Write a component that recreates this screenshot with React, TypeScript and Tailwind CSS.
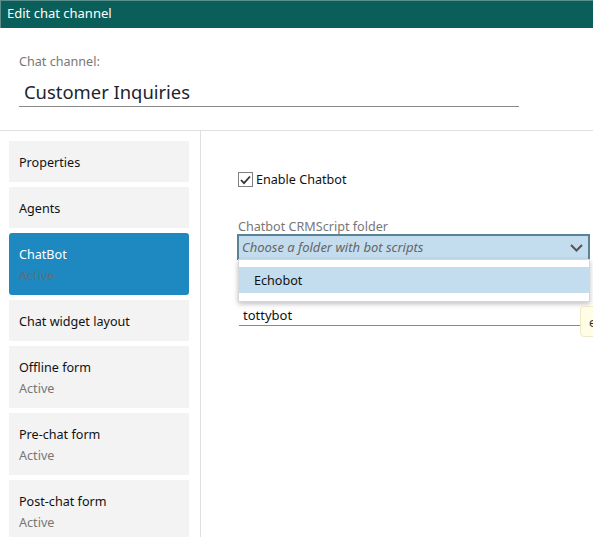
import React from "react";

const items = [
  { t: "Properties" },
  { t: "Agents" },
  { t: "ChatBot", s: "Active", active: true },
  { t: "Chat widget layout" },
  { t: "Offline form", s: "Active" },
  { t: "Pre-chat form", s: "Active" },
  { t: "Post-chat form", s: "Active" },
];

export default function App() {
  return (
    <div className="w-[593px] h-[537px] overflow-hidden bg-white text-[12.6px] text-[#111] flex flex-col" style={{ fontFamily: '"Noto Sans", "Open Sans", sans-serif' }}>
      <div className="h-[28px] shrink-0 bg-[#0a5f5a] text-white text-[13px] leading-[25px] pl-[6px] border-l border-t border-[#5c8f8c]">Edit chat channel</div>
      <div className="h-[103px] shrink-0 border-b border-[#e0e0e0] pl-[19px] pt-[25px]">
        <div className="text-[#777] leading-[17px]">Chat channel:</div>
        <div className="w-[500px] h-[33px] mt-[4px] border-b border-[#8a8a8a] pl-[5px] text-[18.4px] leading-[35px] text-[#1a2530]">Customer Inquiries</div>
      </div>
      <div className="flex flex-1 min-h-0">
        <div className="w-[201px] shrink-0 border-r border-[#e0e0e0] pl-[9px] pt-[10px] flex flex-col gap-[5px]">
          {items.map((i) => (
            <div key={i.t} className={`w-[180px] shrink-0 pl-[10px] pt-[13px] ${i.s ? "h-[62px]" : "h-[41px]"} ${i.active ? "bg-[#1e88c0] rounded-[3px] text-white" : "bg-[#f3f3f3]"}`}>
              <div className="leading-[18px]">{i.t}</div>
              {i.s && <div className={`leading-[18px] mt-[3px] ${i.active ? "text-[#5f6f78]" : "text-[#777]"}`}>{i.s}</div>}
            </div>
          ))}
        </div>
        <div className="flex-1 min-w-0 pl-[37px] pt-[41px] relative">
          <div className="flex items-center h-[15px]">
            <span className="w-[15px] h-[15px] border border-[#808080] flex items-center justify-center">
              <svg width="11" height="10" viewBox="0 0 11 10" fill="none"><path d="M1 5l3 3.2L10 1.5" stroke="#333" strokeWidth="1.8" /></svg>
            </span>
            <span className="ml-[3px] leading-[15px]">Enable Chatbot</span>
          </div>
          <div className="mt-[32px] text-[#777] leading-[15px]">Chatbot CRMScript folder</div>
          <div className="w-[353px] h-[26px] -ml-[1px] border-2 border-[#5a8296] border-b-0 bg-[#c3dcee] flex items-center justify-between pl-[3px] pr-[5px]">
            <span className="italic text-[#666] text-[13px] leading-[20px] -mt-[2px]">Choose a folder with bot scripts</span>
            <svg width="13" height="8" viewBox="0 0 13 8" fill="none"><path d="M1 1l5.5 5.5L12 1" stroke="#555" strokeWidth="2" /></svg>
          </div>
          <div className="mt-[45px] w-[342px] h-[21px] ml-[1px] border-b border-[#8a8a8a] pl-[4px] text-[13px] leading-[21px]">tottybot</div>
          <div className="absolute left-[37px] top-[128px] w-[352px] h-[43px] bg-white border border-[#d8d8d8] shadow-[0_2px_5px_rgba(0,0,0,0.25)] pt-[7px]">
            <div className="h-[26px] bg-[#c3dcee] pl-[15px] leading-[28px]">Echobot</div>
          </div>
          <div className="absolute left-[379px] top-[175px] w-[40px] h-[31px] bg-[#fffde6] border border-[#eeeac8] rounded-[4px] pl-[8px] leading-[31px] text-[#333]">e</div>
        </div>
      </div>
    </div>
  );
}
